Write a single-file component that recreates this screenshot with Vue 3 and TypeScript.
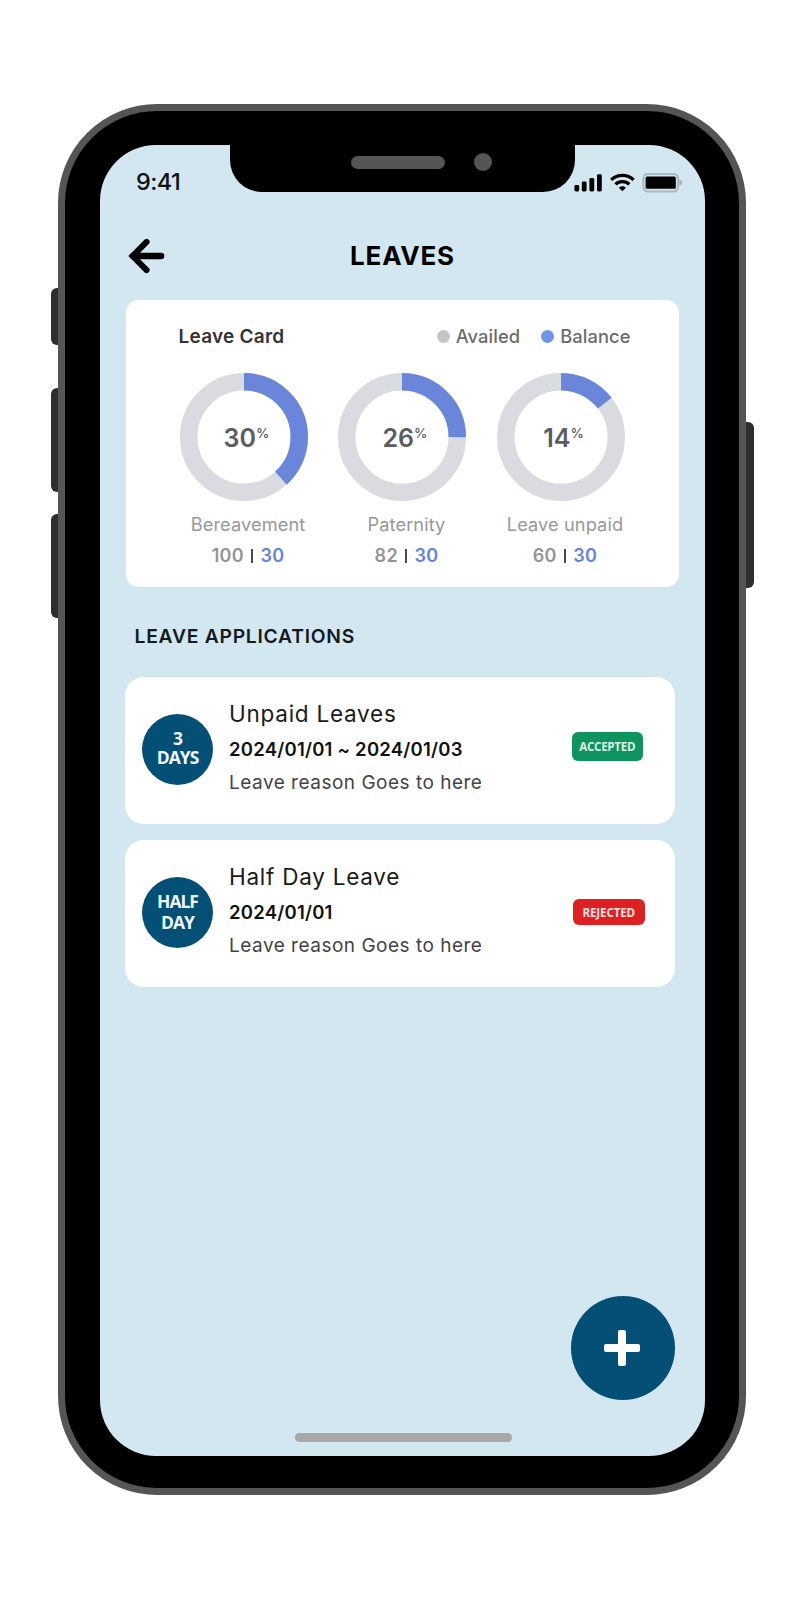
<script setup lang="ts">
interface LeaveBalance {
  label: string
  percent: number
  share: number
  availed: number
  balance: number
}

interface LeaveApplication {
  badge: [string, string]
  title: string
  dates: string
  reason: string
  status: 'accepted' | 'rejected'
}

const radius = 55.25
const circumference = 2 * Math.PI * radius

const balances: LeaveBalance[] = [
  { label: 'Bereavement', percent: 30, share: 0.383, availed: 100, balance: 30 },
  { label: 'Paternity', percent: 26, share: 0.25, availed: 82, balance: 30 },
  { label: 'Leave unpaid', percent: 14, share: 0.145, availed: 60, balance: 30 },
]

const applications: LeaveApplication[] = [
  {
    badge: ['3', 'DAYS'],
    title: 'Unpaid Leaves',
    dates: '2024/01/01 ~ 2024/01/03',
    reason: 'Leave reason Goes to here',
    status: 'accepted',
  },
  {
    badge: ['HALF', 'DAY'],
    title: 'Half Day Leave',
    dates: '2024/01/01',
    reason: 'Leave reason Goes to here',
    status: 'rejected',
  },
]

const dash = (share: number): string => `${share * circumference} ${circumference}`
</script>

<template>
  <main class="stage">
    <div class="phone">
      <i class="key key-mute"></i>
      <i class="key key-up"></i>
      <i class="key key-down"></i>
      <i class="key key-power"></i>

      <div class="body">
        <div class="screen">
          <div class="notch">
            <span class="speaker"></span>
            <span class="camera"></span>
          </div>

          <div class="status-bar">
            <span class="time">9:41</span>
            <svg class="status-icons" width="110" height="20" viewBox="0 0 110 20">
              <rect x="0.4" y="12" width="4.8" height="6.4" rx="1.4" />
              <rect x="7.8" y="8.6" width="4.8" height="9.8" rx="1.4" />
              <rect x="15.4" y="5" width="4.8" height="13.4" rx="1.4" />
              <rect x="23" y="1.2" width="4.8" height="17.2" rx="1.4" />
              <g fill="none" stroke="#000" stroke-width="3.3">
                <path d="M37.2 6.9a16 16 0 0 1 22.4 0" />
                <path d="M41.5 11.4a9.8 9.8 0 0 1 13.8 0" />
              </g>
              <path d="M48.4 18.2l-3.5-3.4a5 5 0 0 1 7 0z" />
              <rect x="69.4" y="0.9" width="34.6" height="17.6" rx="4.4" fill="none" stroke="#a9b9c1" stroke-width="2" />
              <path d="M105.2 6.6c4.2 1 4.2 5.2 0 6.2z" fill="#a9b9c1" />
              <rect x="71.6" y="3.4" width="30.2" height="12.4" rx="1.5" />
            </svg>
          </div>

          <header class="header">
            <button class="back" aria-label="Back">
              <svg width="38" height="36" viewBox="0 0 38 36">
                <path d="M19.6 3.9L5.6 18l14 14.1" fill="none" stroke="#000" stroke-width="6" stroke-linecap="round" stroke-linejoin="miter" />
                <path d="M6 18h28" fill="none" stroke="#000" stroke-width="6.6" stroke-linecap="round" />
              </svg>
            </button>
            <h1>LEAVES</h1>
          </header>

          <section class="leave-card">
            <div class="card-head">
              <h2>Leave Card</h2>
              <div class="legend">
                <span class="legend-item"><i class="dot dot-availed"></i>Availed</span>
                <span class="legend-item"><i class="dot dot-balance"></i>Balance</span>
              </div>
            </div>
            <div class="donuts">
              <div v-for="item in balances" :key="item.label" class="donut-col">
                <div class="donut">
                  <svg width="128" height="128" viewBox="0 0 128 128">
                    <circle cx="64" cy="64" :r="radius" fill="none" stroke="#dadbe0" stroke-width="17.5" />
                    <circle
                      cx="64" cy="64" :r="radius" fill="none" stroke="#6a86da" stroke-width="17.5"
                      :stroke-dasharray="dash(item.share)" transform="rotate(-90 64 64)"
                    />
                  </svg>
                  <div class="percent">{{ item.percent }}<span>%</span></div>
                </div>
                <div class="donut-label">{{ item.label }}</div>
                <div class="counts">
                  <span>{{ item.availed }}</span><i></i><b>{{ item.balance }}</b>
                </div>
              </div>
            </div>
          </section>

          <h2 class="section-title">LEAVE APPLICATIONS</h2>

          <ul class="applications">
            <li v-for="app in applications" :key="app.title" class="application">
              <div class="badge" :class="app.status">
                <span>{{ app.badge[0] }}</span>
                <span>{{ app.badge[1] }}</span>
              </div>
              <div class="details">
                <div class="title">{{ app.title }}</div>
                <div class="dates">{{ app.dates }}</div>
                <div class="reason">{{ app.reason }}</div>
              </div>
              <span class="status" :class="app.status">{{ app.status.toUpperCase() }}</span>
            </li>
          </ul>

          <button class="fab" aria-label="Add leave">
            <svg width="36" height="36" viewBox="0 0 36 36" fill="#fff">
              <rect x="14" y="0" width="8" height="36" rx="2" />
              <rect x="0" y="14" width="36" height="8" rx="2" />
            </svg>
          </button>
          <div class="home-bar"></div>
        </div>
      </div>
    </div>
  </main>
</template>

<style>
body {
  background: #fff;
}
</style>

<style scoped>
* {
  box-sizing: border-box;
  margin: 0;
}

.stage {
  height: 1600px;
  padding: 104px 59px 0 58px;
  background: #fff;
  font-family: Inter, "Liberation Sans", sans-serif;
  color: #000;
  white-space: nowrap;
}

.phone {
  position: relative;
  width: 688px;
  height: 1391px;
}

.body {
  position: relative;
  height: 100%;
  padding: 34px 34px 0 35px;
  border: 7px solid #555;
  border-radius: 99px;
  background: #000;
}

.key {
  position: absolute;
  width: 16px;
  border-radius: 6px;
  background: #2e2e2e;
}

.key-mute {
  left: -7px;
  top: 184px;
  height: 57px;
}

.key-up {
  left: -7px;
  top: 283.5px;
  height: 104px;
}

.key-down {
  left: -7px;
  top: 409.5px;
  height: 104px;
}

.key-power {
  right: -7.5px;
  top: 318px;
  height: 166px;
}

.screen {
  position: relative;
  display: flex;
  flex-direction: column;
  height: 1311px;
  border-radius: 56px;
  background: #d3e7f0;
  overflow: hidden;
}

.notch {
  position: absolute;
  top: 0;
  left: 130px;
  display: flex;
  align-items: center;
  width: 345px;
  height: 47px;
  padding: 0 0 13px 121px;
  border-radius: 0 0 32px 32px;
  background: #000;
}

.speaker {
  width: 94px;
  height: 13px;
  border-radius: 7px;
  background: #555;
}

.camera {
  width: 18px;
  height: 18px;
  margin-left: 29px;
  border-radius: 50%;
  background: #555;
}

.status-bar {
  display: flex;
  justify-content: space-between;
  align-items: flex-start;
  height: 74px;
  padding: 28px 21px 0 36px;
}

.time {
  font-size: 23.5px;
  font-weight: 500;
  line-height: 18px;
  letter-spacing: -0.6px;
  color: #111;
}

.header {
  display: flex;
  align-items: center;
  height: 74px;
  padding: 0 27px;
}

.back {
  display: block;
  width: 38px;
  height: 36px;
  padding: 0;
  border: 0;
  background: none;
}

h1 {
  flex: 1;
  padding-right: 38px;
  text-align: center;
  font-size: 26px;
  font-weight: 700;
  line-height: 30px;
  letter-spacing: 0.8px;
}

.leave-card {
  width: 553.5px;
  height: 287px;
  margin: 7px 0 0 25.5px;
  padding: 25px 0 0 54px;
  border-radius: 13px;
  background: #fff;
}

.card-head {
  display: flex;
  justify-content: space-between;
  align-items: center;
  height: 22px;
  padding: 0 48.5px 0 0;
}

.card-head h2 {
  margin-left: -1px;
  font-size: 19px;
  font-weight: 600;
  letter-spacing: 0.25px;
  color: #333;
}

.legend {
  display: flex;
  gap: 21px;
}

.legend-item {
  display: flex;
  align-items: center;
  font-size: 18.3px;
  font-weight: 500;
  line-height: 21px;
  letter-spacing: 0.1px;
  color: #6b6b6d;
}

.dot {
  width: 13px;
  height: 13px;
  margin-right: 6px;
  border-radius: 50%;
}

.dot-availed {
  background: #c4c5cb;
}

.dot-balance {
  background: #6f94ea;
}

.donuts {
  display: flex;
  gap: 30.5px;
  margin-top: 26px;
}

.donut-col {
  width: 128px;
}

.donut {
  display: grid;
  height: 128px;
}

.donut > * {
  grid-area: 1 / 1;
}

.percent {
  display: flex;
  justify-content: center;
  align-items: flex-start;
  padding: 50px 0 0 6px;
  font-size: 25px;
  font-weight: 600;
  line-height: 30px;
  color: #5c5c5e;
}

.percent span {
  margin-top: -5px;
  font-size: 13.5px;
  font-weight: 500;
}

.donut-label {
  display: flex;
  justify-content: center;
  width: 137px;
  margin-top: 11.5px;
  font-size: 18.2px;
  line-height: 22px;
  letter-spacing: 0.1px;
  color: #98989a;
}

.counts {
  display: flex;
  justify-content: center;
  align-items: center;
  width: 137px;
  margin-top: 10px;
  font-size: 18px;
  font-weight: 600;
  line-height: 22px;
  letter-spacing: 0.3px;
  color: #949496;
}

.counts i {
  width: 2.5px;
  height: 14px;
  margin: 0 7px;
  background: #4a4a4c;
}

.counts b {
  font-weight: 600;
  color: #6483e0;
}

.section-title {
  margin: 37px 0 0 34.5px;
  font-size: 19.3px;
  font-weight: 600;
  line-height: 24px;
  letter-spacing: 0.75px;
  color: #141a1d;
}

.applications {
  display: flex;
  flex-direction: column;
  gap: 16px;
  margin: 28.5px 30.5px 0 24.5px;
  padding: 0;
  list-style: none;
}

.application {
  display: flex;
  align-items: flex-start;
  height: 147px;
  padding: 24.5px 31.5px 0 17.5px;
  border-radius: 19px;
  background: #fff;
}

.badge {
  display: flex;
  flex-direction: column;
  align-items: center;
  width: 71px;
  height: 71px;
  margin-top: 12.5px;
  padding-top: 15.5px;
  border-radius: 50%;
  background: #044f76;
  color: #eef6fa;
  font-family: "Open Sans", "Noto Sans", sans-serif;
  font-size: 17.5px;
  font-weight: 700;
  line-height: 19px;
  letter-spacing: -1px;
}

.badge.rejected {
  padding-top: 14.5px;
  line-height: 20.5px;
}

.details {
  flex: 1;
  margin-left: 16px;
}

.title {
  font-size: 22.5px;
  line-height: 26px;
  letter-spacing: 0.75px;
  color: #1a1a1a;
}

.dates {
  margin-top: 9.5px;
  font-size: 18.5px;
  font-weight: 600;
  line-height: 24px;
  letter-spacing: 0.23px;
  color: #111;
}

.reason {
  margin-top: 10px;
  font-size: 19px;
  font-weight: 400;
  line-height: 24px;
  letter-spacing: 0.5px;
  color: #444;
}

.status {
  width: 71.5px;
  height: 29px;
  margin-top: 30.5px;
  border-radius: 6px;
  font-family: "Open Sans", "Noto Sans", sans-serif;
  font-size: 11.6px;
  font-weight: 700;
  line-height: 30px;
  text-align: center;
  letter-spacing: -0.3px;
  color: #dcf1e8;
  background: #0f9460;
}

.status.rejected {
  height: 26px;
  margin: 35px -1.5px 0 0;
  line-height: 27px;
  letter-spacing: -0.15px;
  color: #fbe4e4;
  background: #de2022;
}

.fab {
  display: grid;
  place-items: center;
  width: 103.5px;
  height: 103.5px;
  margin: auto 30.5px 33.5px auto;
  padding: 1px 2px 0 0;
  border: 0;
  border-radius: 50%;
  background: #044f76;
}

.home-bar {
  width: 216.5px;
  height: 8.5px;
  margin: 0 0 14.5px 195px;
  border-radius: 5px;
  background: #a8a8a8;
}
</style>
